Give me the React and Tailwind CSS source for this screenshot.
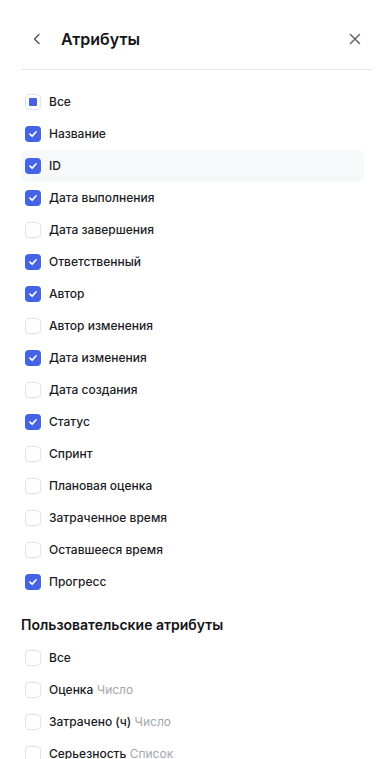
import React from "react";

const items = [
  ["Название", true],
  ["ID", true, true],
  ["Дата выполнения", true],
  ["Дата завершения", false],
  ["Ответственный", true],
  ["Автор", true],
  ["Автор изменения", false],
  ["Дата изменения", true],
  ["Дата создания", false],
  ["Статус", true],
  ["Спринт", false],
  ["Плановая оценка", false],
  ["Затраченное время", false],
  ["Оставшееся время", false],
  ["Прогресс", true],
];

const custom = [
  ["Оценка", "Число"],
  ["Затрачено (ч)", "Число"],
  ["Серьезность", "Список"],
];

function Box({ state }) {
  if (state === "checked") {
    return (
      <span className="w-4 h-4 rounded-[4px] bg-[#4463e6] flex items-center justify-center shrink-0">
        <svg width="10" height="10" viewBox="0 0 10 10" fill="none">
          <path d="M2 5.2L4.1 7.2L8 3" stroke="white" strokeWidth="1.8" strokeLinecap="round" strokeLinejoin="round" />
        </svg>
      </span>
    );
  }
  if (state === "partial") {
    return (
      <span className="w-4 h-4 rounded-[4px] border border-[#dfe2e7] bg-white flex items-center justify-center shrink-0">
        <span className="w-2 h-2 bg-[#4463e6] rounded-[1px]" />
      </span>
    );
  }
  return <span className="w-4 h-4 rounded-[4px] border border-[#dfe2e7] bg-white shrink-0" />;
}

function Row({ state, label, hint, hl }) {
  return (
    <div className={`h-8 flex items-center gap-2 pl-1 rounded-md ${hl ? "bg-[#f7f8fa]" : ""}`}>
      <Box state={state} />
      <span className="text-[12px] font-medium text-[#1b1b1f] leading-none">
        {label}
        {hint && <span className="text-[#a3a7ae] font-normal"> {hint}</span>}
      </span>
    </div>
  );
}

export default function App() {
  return (
    <div className="w-[378px] h-[759px] bg-white overflow-hidden" style={{ fontFamily: "Inter, 'Noto Sans', sans-serif" }}>
      <div className="h-[69px] pt-2 flex items-center pl-[21px] pr-[16px]">
        <svg width="16" height="16" viewBox="0 0 16 16" fill="none" className="ml-[8px]">
          <path d="M10 3.5L5.5 8L10 12.5" stroke="#555a61" strokeWidth="1.5" strokeLinecap="round" strokeLinejoin="round" />
        </svg>
        <span className="ml-[16px] text-[16px] font-semibold text-[#141418]">Атрибуты</span>
        <svg width="14" height="14" viewBox="0 0 14 14" fill="none" className="ml-auto">
          <path d="M2.5 2.5L11.5 11.5M11.5 2.5L2.5 11.5" stroke="#5f646b" strokeWidth="1.5" strokeLinecap="round" />
        </svg>
      </div>
      <div className="ml-[21px] mr-[6px] border-t border-[#e6e7ea]" />
      <div className="pl-[21px] pr-[14px] pt-4">
        <Row state="partial" label="Все" />
        {items.map(([l, c, hl]) => (
          <Row key={l} state={c ? "checked" : "none"} label={l} hl={hl} />
        ))}
        <div className="mt-[14px] h-6 flex items-center text-[14px] font-semibold text-[#141418]">Пользовательские атрибуты</div>
        <div className="mt-[6px]">
          <Row state="none" label="Все" />
          {custom.map(([l, h]) => (
            <Row key={l} state="none" label={l} hint={h} />
          ))}
        </div>
      </div>
    </div>
  );
}
